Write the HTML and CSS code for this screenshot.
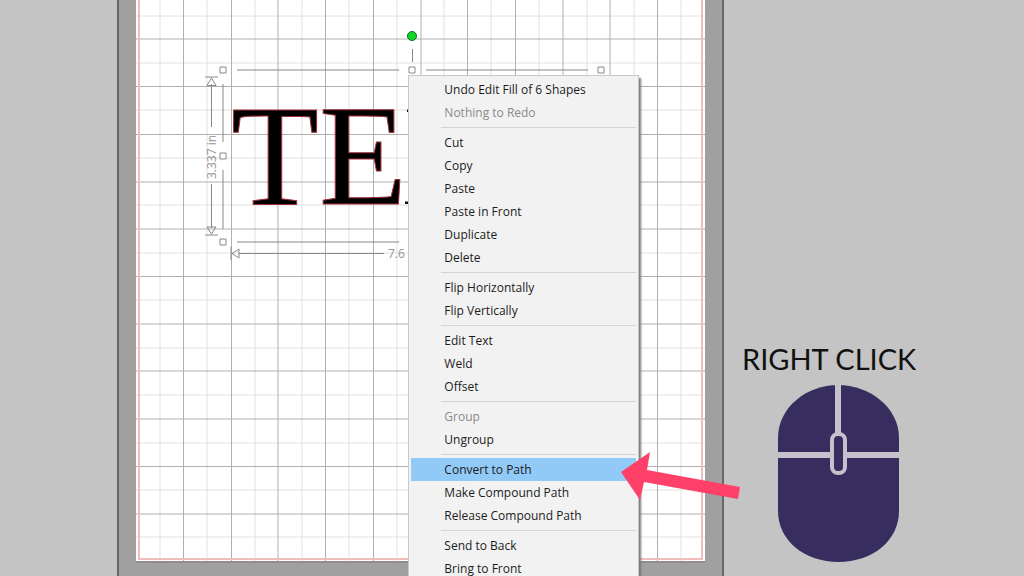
FILE: index.html
```html
<!DOCTYPE html>
<html lang="en">
<head>
<meta charset="utf-8">
<title>Convert to Path</title>
<link rel="stylesheet" href="styles.css">
</head>
<body>
<main class="scene">
  <section class="workspace" aria-label="Design area">
    <svg class="artboard" viewBox="0 0 607 576" role="img" aria-label="Text selected on the cutting mat">
      <rect class="mat" width="607" height="576"/>
      <path class="mat-edge" d="M1 0V576M606 0V576"/>
      <rect class="page" x="19" y="0" width="569" height="561"/>
      <path class="page-shade" d="M19 562H588"/>
      <path class="grid-minor" d="M43 0V561M90 0V561M138 0V561M185 0V561M232 0V561M280 0V561M327 0V561M374 0V561M422 0V561M470 0V561M517 0V561M564 0V561M19 16H588M19 63H588M19 110H588M19 158H588M19 205H588M19 253H588M19 300H588M19 348H588M19 395H588M19 443H588M19 490H588M19 537H588"/>
      <path class="grid-major" d="M66.500 0V561M114.500 0V561M161 0V561M208.500 0V561M256.500 0V561M304 0V561M350.500 0V561M398.500 0V561M446 0V561M493 0V561M540.500 0V561M19 39H588M19 86.500H588M19 134.500H588M19 182H588M19 229H588M19 276.500H588M19 324H588M19 371H588M19 419H588M19 466.500H588M19 514H588"/>
      <path class="margin-line" d="M22 0V559H585V0"/>
      <text class="design-text" x="114" y="204">TE</text>
      <path class="next-letter" d="M290 109.500H296V112H290ZM288 201.500H296V204H288Z"/>
      <g class="guides">
        <path d="M120 70H282M309 70H471M295.500 49V62M106 84V142M106 170V229M120 242H282M94.500 84V127M94.500 184V228M88 77H101M88 235H101M114 247V260M122 253.500H267"/>
        <path d="M94.500 78L99 85.500H90ZM94.500 234L99 227H90ZM115 253.500L122 249V258Z"/>
        <path class="handle" d="M103 67h6v6h-6zM292 67h6v6h-6zM481 67h6v6h-6zM103 153h6v6h-6zM103 239h6v6h-6z"/>
      </g>
      <circle class="rotate-handle" cx="295" cy="36" r="4.500"/>
      <text class="measure" transform="translate(99 179) rotate(-90)">3.337 in</text>
      <text class="measure" x="271" y="258">7.6</text>
    </svg>

    <menu class="context-menu">
      <li><button>Undo Edit Fill of 6 Shapes</button></li>
      <li><button disabled>Nothing to Redo</button></li>
      <li class="group-start"><button>Cut</button></li>
      <li><button>Copy</button></li>
      <li><button>Paste</button></li>
      <li><button>Paste in Front</button></li>
      <li><button>Duplicate</button></li>
      <li><button>Delete</button></li>
      <li class="group-start"><button>Flip Horizontally</button></li>
      <li><button>Flip Vertically</button></li>
      <li class="group-start"><button>Edit Text</button></li>
      <li><button>Weld</button></li>
      <li><button>Offset</button></li>
      <li class="group-start"><button disabled>Group</button></li>
      <li><button>Ungroup</button></li>
      <li class="group-start"><button class="active">Convert to Path</button></li>
      <li><button>Make Compound Path</button></li>
      <li><button>Release Compound Path</button></li>
      <li class="group-start"><button>Send to Back</button></li>
      <li><button>Bring to Front</button></li>
    </menu>

    <svg class="pointer" width="120" height="50" viewBox="0 0 120 50" aria-hidden="true">
      <path d="M0 21L29 1L26 19L119 36L117 48L23 31L19 49Z"/>
    </svg>
  </section>

  <aside class="callout">
    <p class="callout-label">RIGHT CLICK</p>
    <svg class="mouse" width="121" height="177" viewBox="0 0 121 177" role="img" aria-label="Computer mouse">
      <path class="mouse-body" d="M60 0C91 0 121 22 121 53V126C121 156 94 177 60.500 177S0 156 0 126V53C0 22 29 0 60 0Z"/>
      <path class="mouse-seam" d="M60 0V50M0 70H121"/>
      <rect class="mouse-wheel" x="54" y="49" width="13" height="39" rx="6"/>
    </svg>
  </aside>
</main>
</body>
</html>
```
FILE: styles.css
```css
* {
  box-sizing: border-box;
}

body {
  margin: 0;
  background: #c4c4c4;
  font-family: "Open Sans", "Noto Sans", sans-serif;
}

.scene {
  display: grid;
  grid-template-columns: 117fr 607fr 300fr;
  height: 100vh;
  overflow: hidden;
}

.workspace {
  grid-column: 2;
  position: relative;
}

.artboard {
  display: block;
  width: 100%;
}

.mat {
  fill: #a0a0a0;
}

.mat-edge {
  stroke: #555;
  stroke-width: 1.5;
}

.page {
  fill: #fff;
}

.page-shade {
  stroke: #938b8c;
  stroke-width: 2;
}

.grid-minor {
  stroke: #e0e0e0;
  stroke-width: 1;
}

.grid-major {
  stroke: #b0b0b0;
  stroke-width: 1;
}

.margin-line {
  fill: none;
  stroke: #f0bcbc;
  stroke-width: 2;
}

.design-text {
  fill: #000;
  stroke: #a03038;
  stroke-width: 1;
  font-family: "Liberation Serif", serif;
  font-size: 144px;
}

.next-letter {
  fill: #200808;
}

.guides {
  fill: none;
  stroke: #888;
  stroke-width: 1;
}

.handle {
  fill: #fff;
}

.rotate-handle {
  fill: #10d828;
  stroke: #176420;
  stroke-width: 1;
}

.measure {
  fill: #939393;
  font-size: 12px;
}

.context-menu {
  position: absolute;
  top: 75px;
  left: 48%;
  width: 38%;
  margin: 0;
  padding: 2px;
  list-style: none;
  background: #f2f2f2;
  border: 1px solid #c8c8c8;
  box-shadow: 2px 3px 2px #777;
}

.context-menu button {
  display: block;
  width: 100%;
  height: 23px;
  padding: 0 0 0 33px;
  border: 0;
  background: none;
  color: #1c1c1c;
  font: 12px/22px "Open Sans", "Noto Sans", sans-serif;
  text-align: left;
  white-space: nowrap;
}

.context-menu button:disabled {
  color: #8a8a8a;
}

.context-menu .active {
  background: #91c9f7;
}

.group-start::before {
  content: "";
  display: block;
  height: 1px;
  margin: 3px 0 3px 30px;
  background: #d4d4d4;
}

.pointer {
  position: absolute;
  top: 451px;
  left: 83%;
  fill: #ff4069;
}

.callout {
  display: flex;
  flex-direction: column;
  align-items: flex-start;
  gap: 8px;
  padding-top: 341px;
  padding-left: 18px;
}

.callout-label {
  margin: 0;
  color: #111;
  font: 29px/36px Lato, sans-serif;
  white-space: nowrap;
}

.mouse {
  margin-left: 36px;
}

.mouse-body {
  fill: #372e5f;
}

.mouse-seam {
  stroke: #c5c1cd;
  stroke-width: 6;
}

.mouse-wheel {
  fill: #372e5f;
  stroke: #c5c1cd;
  stroke-width: 4;
}
```
